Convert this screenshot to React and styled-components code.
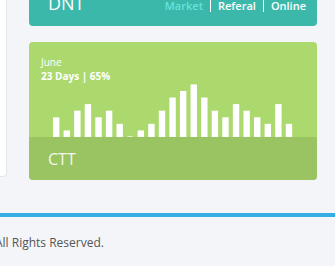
import styled, { createGlobalStyle } from 'styled-components';

const GlobalStyle = createGlobalStyle`
  html, body {
    margin: 0;
    padding: 0;
    background: #f4f5f8;
    font-family: "Open Sans", "Liberation Sans", sans-serif;
    overflow: hidden;
  }
`;

const Main = styled.div`
  display: flex;
  gap: 22px;
  height: 213px;
  padding-right: 18px;
`;

const SidePanel = styled.div`
  width: 6px;
  height: 176px;
  background: #fff;
  border-right: 1px solid #e3e5ea;
  border-bottom: 1px solid #e3e5ea;
  border-bottom-right-radius: 4px;
  flex-shrink: 0;
`;

const Content = styled.div`
  flex: 1;
  display: flex;
  flex-direction: column;
  gap: 16px;
`;

const TealCard = styled.div`
  height: 56px;
  margin-top: -30px;
  background: #3cb8ab;
  border-radius: 0 0 4px 4px;
  display: flex;
  align-items: flex-end;
  justify-content: space-between;
  padding: 0 11px 14px 19px;
  box-sizing: border-box;
  color: #fff;
`;

const CardTitle = styled.div`
  font-size: 18px;
  line-height: 18px;
`;

const Links = styled.div`
  display: flex;
  align-items: center;
  font-size: 11px;
  font-weight: 600;
  line-height: 12px;
`;

const LinkItem = styled.span`
  color: ${p => (p.active ? '#66e3d9' : '#fff')};
  padding: 0 7px;
  border-left: ${p => (p.first ? 'none' : '1px solid #fff')};
  &:last-child {
    padding-right: 0;
  }
`;

const ChartCard = styled.div`
  height: 138px;
  background: #abd96d;
  border-radius: 4px;
  overflow: hidden;
  display: flex;
  flex-direction: column;
  color: #fff;
`;

const ChartTop = styled.div`
  flex: 1;
  display: flex;
  flex-direction: column;
  padding: 13px 12px 0 12px;
`;

const Month = styled.div`
  font-size: 10px;
  line-height: 14px;
`;

const Summary = styled.div`
  font-size: 10px;
  font-weight: 700;
  line-height: 14px;
`;

const ChartArea = styled.div`
  flex: 1;
  display: flex;
  align-items: flex-end;
  padding-left: 12px;
`;

const ChartBottom = styled.div`
  height: 43px;
  background: #9ac362;
  padding: 0 19px;
  display: flex;
  align-items: center;
  font-size: 16px;
  color: #f3f9ea;
`;

const Footer = styled.footer`
  border-top: 4px solid #35aee3;
  padding: 17px 0;
  font-size: 12px;
  color: #555;
`;

const FooterText = styled.div`
  margin-left: -5px;
`;

const values = [3, 1, 4, 5, 3, 4, 2, 0, 1, 2, 4, 6, 7, 8, 6, 4, 3, 5, 4, 3, 2, 5, 2];

const BarChart = () => {
  const pitch = 10.58;
  const w = 6.4;
  const h = 54;
  const unit = 6.58;
  return (
    <svg width="245" height={h} viewBox={`0 0 245 ${h}`}>
      {values.map((v, i) =>
        v === 0 ? (
          <rect key={i} x={i * pitch + 0.5} y={h - 1} width={5} height={1} fill="#fff" opacity="0.6" />
        ) : (
          <rect key={i} x={i * pitch} y={h - v * unit} width={w} height={v * unit} fill="#fff" />
        )
      )}
    </svg>
  );
};

const App = () => {
  return (
    <>
      <GlobalStyle />
      <Main>
        <SidePanel />
        <Content>
          <TealCard>
            <CardTitle>DNT</CardTitle>
            <Links>
              <LinkItem first active>Market</LinkItem>
              <LinkItem>Referal</LinkItem>
              <LinkItem>Online</LinkItem>
            </Links>
          </TealCard>
          <ChartCard>
            <ChartTop>
              <Month>June</Month>
              <Summary>23 Days | 65%</Summary>
              <ChartArea>
                <BarChart />
              </ChartArea>
            </ChartTop>
            <ChartBottom>CTT</ChartBottom>
          </ChartCard>
        </Content>
      </Main>
      <Footer>
        <FooterText>All Rights Reserved.</FooterText>
      </Footer>
    </>
  );
};

export default App;
